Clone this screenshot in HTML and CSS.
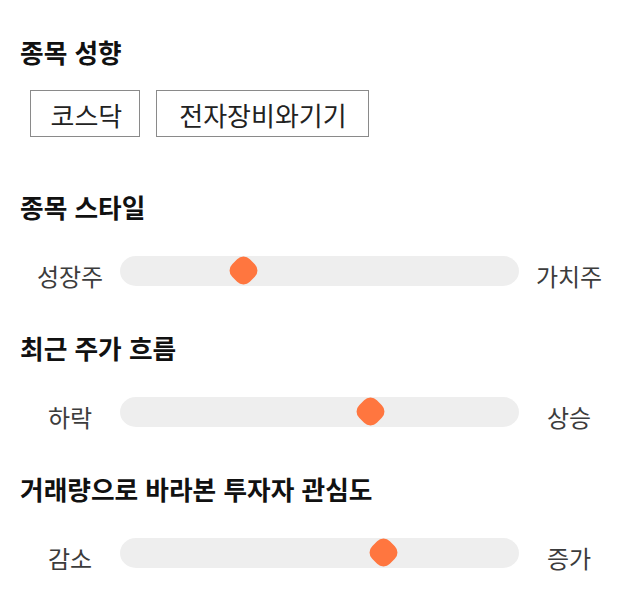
FILE: index.html
```html
<!DOCTYPE html>
<html lang="ko">
<head>
<meta charset="utf-8">
<title>종목 분석</title>
<link rel="stylesheet" href="styles.css">
</head>
<body>
<main class="panel">
  <section class="group group-chips">
    <h2 class="title">종목 성향</h2>
    <div class="chips">
      <span class="chip">코스닥</span>
      <span class="chip chip-wide">전자장비와기기</span>
    </div>
  </section>

  <section class="group">
    <h2 class="title">종목 스타일</h2>
    <div class="slider">
      <span class="label">성장주</span>
      <div class="track"><span class="thumb" style="left: 109px"></span></div>
      <span class="label">가치주</span>
    </div>
  </section>

  <section class="group">
    <h2 class="title">최근 주가 흐름</h2>
    <div class="slider">
      <span class="label">하락</span>
      <div class="track"><span class="thumb" style="left: 236px"></span></div>
      <span class="label">상승</span>
    </div>
  </section>

  <section class="group">
    <h2 class="title">거래량으로 바라본 투자자 관심도</h2>
    <div class="slider">
      <span class="label">감소</span>
      <div class="track"><span class="thumb" style="left: 249px"></span></div>
      <span class="label">증가</span>
    </div>
  </section>
</main>
</body>
</html>
```

FILE: styles.css
```css
* { box-sizing: border-box; }

html, body {
  margin: 0;
  padding: 0;
  background: #ffffff;
}

body {
  font-family: "Noto Sans CJK KR", "Noto Sans", sans-serif;
  color: #222;
}

.panel {
  padding: 37px 20px 0 20px;
  display: flex;
  flex-direction: column;
}

.group {
  display: flex;
  flex-direction: column;
  gap: 34px;
  margin-bottom: 47px;
}

.group-chips {
  gap: 23px;
  margin-bottom: 55px;
}

.title {
  margin: 0;
  padding-left: 0;
  font-size: 25.7px;
  line-height: 30px;
  font-weight: 700;
  color: #111;
  white-space: nowrap;
}

.chips {
  display: flex;
  gap: 16px;
  padding-left: 10px;
}

.chip {
  display: inline-flex;
  align-items: center;
  height: 47px;
  padding: 2px 16.5px 0 19.5px;
  border: 1px solid #8a8a8a;
  font-size: 26px;
  color: #222;
  white-space: nowrap;
}

.chip-wide {
  padding: 2px 21.5px 0 22.5px;
}

.slider {
  display: flex;
  align-items: flex-start;
  height: 30px;
}

.label {
  width: 100px;
  flex: none;
  text-align: center;
  font-size: 24px;
  line-height: 30px;
  margin-top: 5px;
  color: #3c3c3c;
}

.track {
  position: relative;
  flex: none;
  width: 399px;
  height: 30px;
  border-radius: 16px / 15px;
  background: #eeeeee;
}

.thumb {
  position: absolute;
  top: 0;
  width: 28px;
  height: 29px;
  display: block;
}

.thumb::before {
  content: "";
  position: absolute;
  left: 1.5px;
  top: 2px;
  width: 25px;
  height: 25px;
  border-radius: 9px;
  background: #ff763f;
  transform: rotate(45deg);
}
```
